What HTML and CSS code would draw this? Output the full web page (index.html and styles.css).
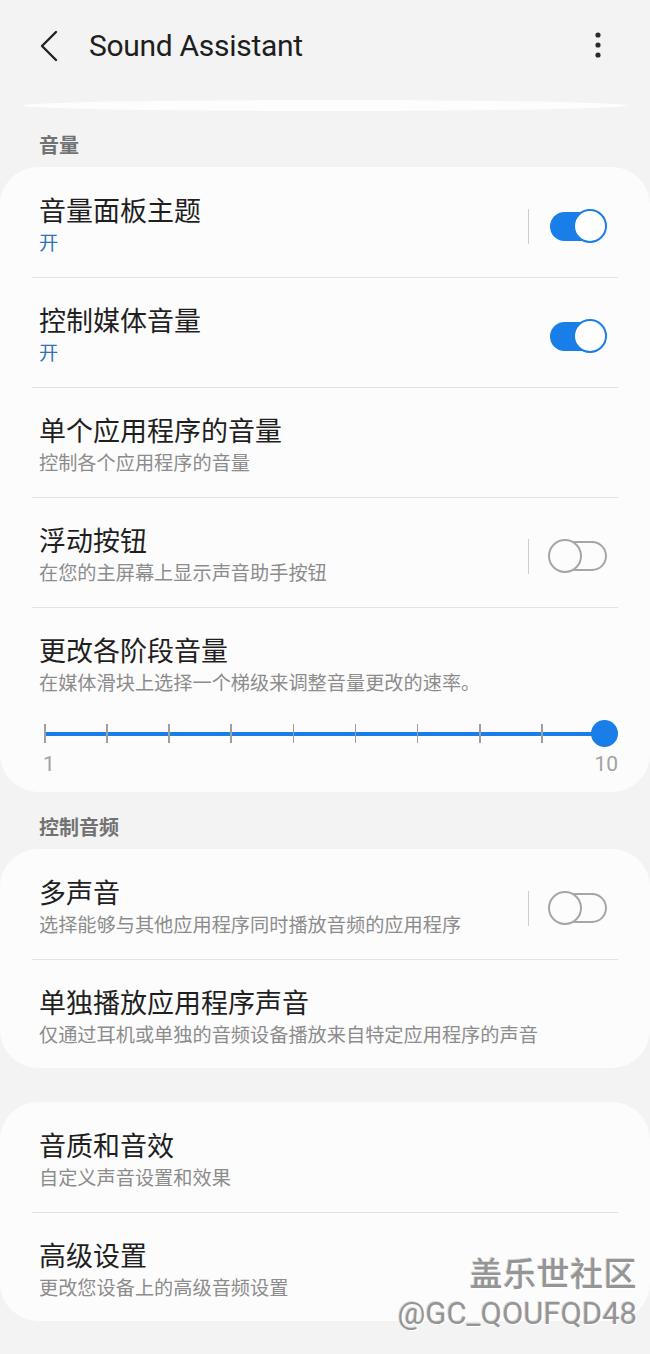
FILE: index.html
```html
<!DOCTYPE html>
<html lang="zh-CN">
<head>
    <meta charset="UTF-8">
    <meta name="viewport" content="width=device-width, initial-scale=1.0">
    <title>Sound Assistant</title>
    <link rel="stylesheet" href="styles.css">
</head>
<body>
    <header class="appbar">
        <button class="back" aria-label="返回">
            <svg width="20" height="32" viewBox="0 0 20 32">
                <polyline points="17,2 3,16 17,30" fill="none" stroke="#222" stroke-width="2.4" stroke-linecap="round" stroke-linejoin="round"/>
            </svg>
        </button>
        <h1>Sound Assistant</h1>
        <button class="more" aria-label="更多选项">
            <svg width="8" height="28" viewBox="0 0 8 28">
                <circle cx="4" cy="4" r="2.6" fill="#2a2a2a"/>
                <circle cx="4" cy="14" r="2.6" fill="#2a2a2a"/>
                <circle cx="4" cy="24" r="2.6" fill="#2a2a2a"/>
            </svg>
        </button>
    </header>

    <div class="sliver"></div>

    <div class="section-label">音量</div>
    <section class="card">
        <div class="row">
            <div class="text">
                <div class="title">音量面板主题</div>
                <div class="sub on">开</div>
            </div>
            <span class="sep"></span>
            <span class="switch checked"></span>
        </div>
        <div class="row">
            <div class="text">
                <div class="title">控制媒体音量</div>
                <div class="sub on">开</div>
            </div>
            <span class="switch checked"></span>
        </div>
        <div class="row">
            <div class="text">
                <div class="title">单个应用程序的音量</div>
                <div class="sub">控制各个应用程序的音量</div>
            </div>
        </div>
        <div class="row">
            <div class="text">
                <div class="title">浮动按钮</div>
                <div class="sub">在您的主屏幕上显示声音助手按钮</div>
            </div>
            <span class="sep"></span>
            <span class="switch"></span>
        </div>
        <div class="row stacked">
            <div class="text">
                <div class="title">更改各阶段音量</div>
                <div class="sub">在媒体滑块上选择一个梯级来调整音量更改的速率。</div>
            </div>
            <div class="slider">
                <div class="ticks">
                    <i></i><i></i><i></i><i></i><i></i><i></i><i></i><i></i><i></i><i></i>
                </div>
                <span class="thumb"></span>
            </div>
            <div class="slider-labels">
                <span>1</span>
                <span>10</span>
            </div>
        </div>
    </section>

    <div class="section-label">控制音频</div>
    <section class="card">
        <div class="row">
            <div class="text">
                <div class="title">多声音</div>
                <div class="sub">选择能够与其他应用程序同时播放音频的应用程序</div>
            </div>
            <span class="sep"></span>
            <span class="switch"></span>
        </div>
        <div class="row">
            <div class="text">
                <div class="title">单独播放应用程序声音</div>
                <div class="sub">仅通过耳机或单独的音频设备播放来自特定应用程序的声音</div>
            </div>
        </div>
    </section>

    <section class="card spaced">
        <div class="row">
            <div class="text">
                <div class="title">音质和音效</div>
                <div class="sub">自定义声音设置和效果</div>
            </div>
        </div>
        <div class="row">
            <div class="text">
                <div class="title">高级设置</div>
                <div class="sub">更改您设备上的高级音频设置</div>
            </div>
        </div>
    </section>

    <div class="watermark">
        <div class="wm-name">盖乐世社区</div>
        <div class="wm-user">@GC_QOUFQD48</div>
    </div>
</body>
</html>
```

FILE: styles.css
```css
body {
    margin: 0;
    min-height: 1354px;
    position: relative;
    background: #f3f3f3;
    color: #1f1f1f;
    font-family: 'Noto Sans CJK SC', 'Noto Sans', sans-serif;
}

/* top bar */
.appbar {
    display: flex;
    align-items: center;
    height: 90px;
}

.appbar button {
    border: none;
    background: none;
    padding: 0;
    display: flex;
}

.back {
    margin-left: 39px;
    margin-top: 2px;
}

.appbar h1 {
    flex: 1;
    margin: 0 0 0 30px;
    font-family: Roboto, 'Noto Sans', sans-serif;
    font-weight: 400;
    font-size: 30px;
    letter-spacing: -0.3px;
    color: #1e1e1e;
}

.more {
    margin-right: 48px;
}

.sliver {
    height: 11px;
    margin: 10px 22px 0;
    background: #fdfdfd;
    border-radius: 50%;
}

.section-label {
    margin: 20px 0 8px;
    padding-left: 39px;
    font-size: 20px;
    line-height: 28px;
    font-weight: 700;
    color: #727272;
}

.card + .section-label {
    margin-top: 21px;
}

.card {
    padding-top: 1px;
    background: #fcfcfc;
    border-radius: 38px;
}

.card.spaced {
    margin-top: 34px;
}

.row {
    display: flex;
    align-items: center;
    margin: 0 32px;
    padding: 26px 7px 19px;
    border-bottom: 1px solid #e2e2e2;
}

.row:last-child {
    border-bottom: none;
    padding-bottom: 18px;
}

.row.stacked {
    display: block;
    padding-bottom: 16px;
}

.text {
    flex: 1;
}

.title {
    font-size: 27px;
    line-height: 32px;
    color: #1f1f1f;
}

.sub {
    font-size: 19.2px;
    line-height: 32px;
    color: #8c8c8c;
}

.sub.on {
    color: #2f72bb;
}

.sep {
    width: 1.5px;
    height: 35px;
    background: #cdcdcd;
    margin-right: 19px;
}

/* switches */
.switch {
    position: relative;
    width: 59px;
    height: 34px;
    margin-right: 4px;
}

.switch::before {
    content: '';
    position: absolute;
    right: 0;
    top: 2px;
    width: 47px;
    height: 30px;
    box-sizing: border-box;
    border: 2px solid #a6a6a6;
    border-radius: 16px;
}

.switch::after {
    content: '';
    position: absolute;
    left: 0;
    top: 0;
    width: 34px;
    height: 34px;
    box-sizing: border-box;
    border: 2px solid #a6a6a6;
    border-radius: 50%;
    background: #fcfcfc;
}

.switch.checked::before {
    left: 2px;
    right: auto;
    top: 3px;
    width: 48px;
    height: 29px;
    border: none;
    background: #1a7ee9;
}

.switch.checked::after {
    left: auto;
    right: 0;
    border-color: #1a7ee9;
    background: #fff;
}

/* step slider */
.slider {
    position: relative;
    margin: 26px -7px 0 5px;
}

.ticks {
    display: flex;
    justify-content: space-between;
    height: 19px;
    margin-right: 13px;
    background: linear-gradient(#1a7ee9, #1a7ee9) center / 100% 4px no-repeat;
}

.ticks i {
    width: 1.5px;
    background: #9e9e9e;
}

.thumb {
    position: absolute;
    right: 0;
    top: -4px;
    width: 27px;
    height: 27px;
    border-radius: 50%;
    background: #1a7ee9;
}

.slider-labels {
    display: flex;
    justify-content: space-between;
    margin: 9px -7px 0 4px;
    font-family: Roboto, sans-serif;
    font-size: 21px;
    line-height: 24px;
    color: #a2a2a2;
}

/* watermark */
.watermark {
    position: absolute;
    right: 13px;
    top: 1250px;
    text-align: right;
    color: #959595;
    text-shadow: 1px 1px 0 #fff, -1px -1px 0 rgba(0, 0, 0, 0.15);
}

.wm-name {
    font-size: 33px;
    line-height: 44px;
    font-weight: 500;
    letter-spacing: 0.5px;
}

.wm-user {
    font-family: Roboto, sans-serif;
    font-size: 31px;
    line-height: 40px;
}
```
